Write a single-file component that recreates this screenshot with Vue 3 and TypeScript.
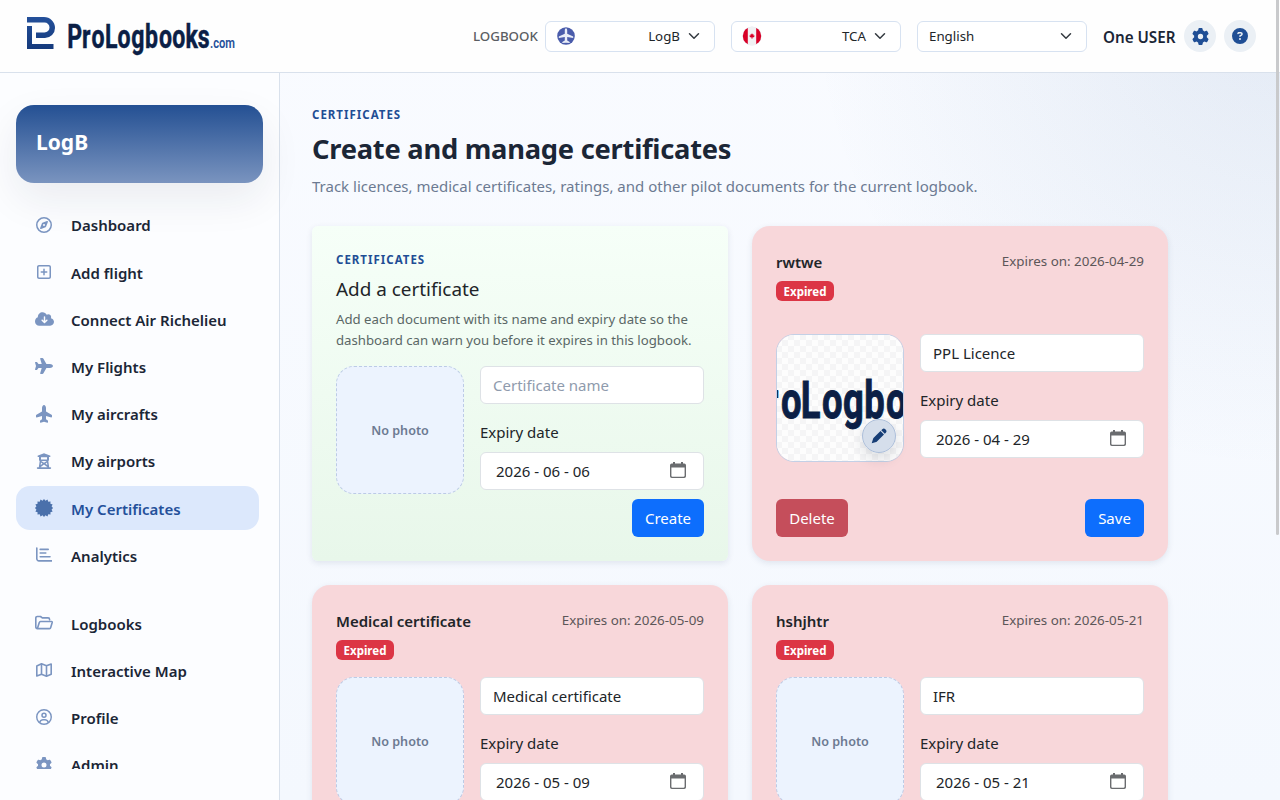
<script setup lang="ts">
interface IconDef { box: string; d: string; w: number; h?: number; stroke?: boolean }
interface NavItem { label: string; icon: string; active?: boolean }
interface Certificate { title: string; name: string; date: string; photo?: boolean }

const icons: Record<string, IconDef> = {
  compass: { box: '0 0 512 512', w: 16, d: 'M464 256A208 208 0 1 0 48 256a208 208 0 1 0 416 0zM0 256a256 256 0 1 1 512 0A256 256 0 1 1 0 256zm306.7 69.1L162.4 380.6c-19.4 7.5-38.5-11.6-31-31l55.5-144.3c3.3-8.5 9.9-15.1 18.4-18.4l144.3-55.5c19.4-7.5 38.5 11.6 31 31L325.1 306.7c-3.2 8.5-9.9 15.1-18.4 18.4zM288 256a32 32 0 1 0 -64 0 32 32 0 1 0 64 0z' },
  plus: { box: '0 0 448 512', w: 14, d: 'M64 80c-8.8 0-16 7.2-16 16V416c0 8.8 7.2 16 16 16H384c8.8 0 16-7.2 16-16V96c0-8.8-7.2-16-16-16H64zM0 96C0 60.7 28.7 32 64 32H384c35.3 0 64 28.7 64 64V416c0 35.3-28.7 64-64 64H64c-35.3 0-64-28.7-64-64V96zM200 344V280H136c-13.3 0-24-10.7-24-24s10.7-24 24-24h64V168c0-13.3 10.7-24 24-24s24 10.7 24 24v64h64c13.3 0 24 10.7 24 24s-10.7 24-24 24H248v64c0 13.3-10.7 24-24 24s-24-10.7-24-24z' },
  cloud: { box: '0 0 640 512', w: 19, d: 'M144 480C64.5 480 0 415.5 0 336c0-62.8 40.2-116.2 96.2-135.9c-.1-2.7-.2-5.4-.2-8.1c0-88.4 71.6-160 160-160c59.3 0 111 32.2 138.7 80.2C409.9 102 428.3 96 448 96c53 0 96 43 96 96c0 12.2-2.3 23.8-6.4 34.6C596 238.4 640 290.1 640 352c0 70.7-57.3 128-128 128H144zm79-167l80 80c9.4 9.4 24.6 9.4 33.9 0l80-80c9.4-9.4 9.4-24.6 0-33.9s-24.6-9.4-33.9 0l-39 39V184c0-13.3-10.7-24-24-24s-24 10.7-24 24V318.1l-39-39c-9.4-9.4-24.6-9.4-33.9 0s-9.4 24.6 0 33.9z' },
  plane: { box: '0 0 576 512', w: 18, d: 'M482.3 192c34.2 0 93.7 29 93.7 64c0 36-59.5 64-93.7 64l-116.6 0L265.2 495.9c-5.7 10-16.3 16.1-27.8 16.1l-56.2 0c-10.6 0-18.3-10.2-15.4-20.4l49-171.6L112 320 68.8 377.6c-3 4-7.8 6.4-12.8 6.4l-42 0c-7.8 0-14-6.3-14-14c0-1.3 .2-2.6 .5-3.9L32 256 .5 145.9c-.4-1.3-.5-2.6-.5-3.9c0-7.8 6.3-14 14-14l42 0c5 0 9.8 2.4 12.8 6.4L112 192l102.9 0-49-171.6C162.9 10.2 170.6 0 181.2 0l56.2 0c11.5 0 22.1 6.2 27.8 16.1L365.7 192l116.6 0z' },
  planeUp: { box: '0 -32 512 576', w: 16, h: 18, d: 'M192 61.7C192 27.5 221-32 256-32c36 0 64 59.5 64 93.7l0 116.6L497.8 278.1c8.8 4.9 14.2 14.1 14.2 24.2l0 45.6c0 11-10.5 19-21.2 16.1L320 320l0 104 57.6 43.2c4 3 6.4 7.8 6.4 12.8l0 42c0 7.8-6.3 14-14 14c-1.3 0-2.6-.2-3.9-.5L256 504 145.9 535.5c-1.3 .4-2.6 .5-3.9 .5c-7.8 0-14-6.3-14-14l0-42c0-5 2.4-9.8 6.4-12.8L192 424l0-104L21.2 364.1C10.5 367 0 359 0 348l0-45.6c0-10.1 5.5-19.4 14.2-24.2L192 178.3z' },
  tower: { box: '0 0 16 16', w: 16, d: 'M8 .2 14 2.6a.8.8 0 0 1-.3 1.5H13V7a.9.9 0 0 1-.7.9l.9 6.4h1.2a.8.8 0 0 1 0 1.6H1.6a.8.8 0 0 1 0-1.6h1.2L3.700 7.900A.9.9 0 0 1 3 7V4.100h-.7A.8.8 0 0 1 2 2.600zM5 4.200v2.200h6V4.200zM5.200 8l2.800 1.800L10.800 8zM5 9.500 4.700 12l1.900-1.300zM11 9.500l.3 2.500-1.900-1.300zM8 11.600l-3.500 2.700h7z' },
  certificate: { box: '0 0 16 16', w: 18, h: 18, d: 'm8 0 1.300 1.500L11.100.500l.700 1.900 2-.200-.100 2 2 .600-1 1.700L16 8l-1.300 1.500 1 1.700-2 .600.100 2-2-.200-.700 1.900-1.800-1L8 16l-1.300-1.500-1.800 1-.700-1.900-2 .200.100-2-2-.600 1-1.700L0 8l1.300-1.500-1-1.700 2-.600-.100-2 2 .200.700-1.900 1.800 1z' },
  chart: { box: '0 0 16 16', w: 16, stroke: true, d: 'M.8 1v10.800a2.100 2.100 0 0 0 2.100 2.100H16M4.200 2.400h8M4.200 6h5.600M4.200 9.800H14' },
  folder: { box: '0 0 18 16', w: 18, stroke: true, d: 'M2.600 13.600H2.300A1.500 1.500 0 0 1 .800 12.100V3A1.500 1.500 0 0 1 2.300 1.500h3.200l1.800 1.400h5.800a1.500 1.500 0 0 1 1.500 1.500v.300M2.400 13.600 4.300 7.400a1.300 1.300 0 0 1 1.200-.900h10.900a.8.8 0 0 1 .8 1l-1.500 5.100a1.300 1.300 0 0 1-1.300 1z' },
  map: { box: '0 0 16 16', w: 16, stroke: true, d: 'M.8 4 5.500 1.800l5 2L15.200 2v10.200l-4.700 2-5-2L.8 14zM5.500 1.800v10.400M10.500 3.800v10.400' },
  user: { box: '0 0 512 512', w: 16, d: 'M406.5 399.6C387.4 352.9 341.5 320 288 320H224c-53.5 0-99.4 32.9-118.5 79.6C69.9 362.2 48 311.7 48 256C48 141.1 141.1 48 256 48s208 93.1 208 208c0 55.7-21.9 106.2-57.5 143.6zm-40.1 32.7C334.4 452.4 296.6 464 256 464s-78.4-11.6-110.5-31.7c7.3-36.7 39.7-64.3 78.5-64.3h64c38.800 0 71.200 27.600 78.500 64.300zM256 512A256 256 0 1 0 256 0a256 256 0 1 0 0 512zm0-272a40 40 0 1 1 0-80 40 40 0 1 1 0 80zm-88-40a88 88 0 1 0 176 0 88 88 0 1 0 -176 0z' },
  gear: { box: '0 0 512 512', w: 16, d: 'M495.9 166.6c3.2 8.7 .5 18.4-6.4 24.6l-43.3 39.4c1.1 8.3 1.7 16.8 1.7 25.4s-.6 17.1-1.7 25.4l43.3 39.4c6.9 6.2 9.6 15.9 6.4 24.6c-4.4 11.9-9.7 23.3-15.8 34.3l-4.7 8.1c-6.6 11-14 21.4-22.1 31.2c-5.9 7.2-15.7 9.6-24.5 6.8l-55.7-17.7c-13.4 10.3-28.2 18.9-44 25.4l-12.5 57.1c-2 9.1-9 16.3-18.2 17.8c-13.8 2.3-28 3.5-42.5 3.5s-28.7-1.2-42.5-3.5c-9.2-1.5-16.2-8.7-18.2-17.8l-12.5-57.1c-15.8-6.5-30.6-15.1-44-25.4L83.1 425.9c-8.8 2.8-18.6 .3-24.5-6.8c-8.1-9.8-15.5-20.2-22.1-31.2l-4.7-8.1c-6.1-11-11.4-22.4-15.800-34.300c-3.200-8.700-.500-18.400 6.400-24.600l43.300-39.400C64.600 273.100 64 264.600 64 256s.6-17.100 1.700-25.400L22.400 191.200c-6.900-6.200-9.600-15.900-6.400-24.600c4.400-11.900 9.700-23.300 15.800-34.300l4.700-8.100c6.600-11 14-21.400 22.100-31.200c5.900-7.200 15.700-9.600 24.500-6.800l55.700 17.700c13.400-10.300 28.200-18.900 44-25.400l12.500-57.100c2-9.100 9-16.300 18.200-17.800C227.300 1.200 241.500 0 256 0s28.700 1.200 42.500 3.500c9.200 1.500 16.200 8.700 18.200 17.800l12.500 57.100c15.800 6.500 30.600 15.100 44 25.400l55.700-17.700c8.800-2.800 18.600-.3 24.500 6.800c8.100 9.800 15.500 20.200 22.100 31.200l4.700 8.100c6.100 11 11.400 22.400 15.800 34.300zM256 336a80 80 0 1 0 0-160 80 80 0 1 0 0 160z' },
}
const question = 'M256 512A256 256 0 1 0 256 0a256 256 0 1 0 0 512zM169.8 165.3c7.9-22.3 29.1-37.3 52.8-37.3h58.3c34.9 0 63.1 28.3 63.1 63.1c0 22.6-12.1 43.5-31.7 54.8L280 264.4c-.2 13-10.9 23.6-24 23.6c-13.3 0-24-10.7-24-24V250.5c0-8.6 4.6-16.5 12.1-20.8l44.3-25.4c4.7-2.7 7.6-7.7 7.6-13.1c0-8.4-6.8-15.1-15.1-15.1H222.6c-3.4 0-6.4 2.1-7.5 5.3l-.4 1.2c-4.4 12.5-18.2 19-30.6 14.6s-19-18.2-14.6-30.6l.4-1.2zM224 352a32 32 0 1 1 64 0 32 32 0 1 1 -64 0z'

const groups: NavItem[][] = [
  [
    { label: 'Dashboard', icon: 'compass' },
    { label: 'Add flight', icon: 'plus' },
    { label: 'Connect Air Richelieu', icon: 'cloud' },
    { label: 'My Flights', icon: 'plane' },
    { label: 'My aircrafts', icon: 'planeUp' },
    { label: 'My airports', icon: 'tower' },
    { label: 'My Certificates', icon: 'certificate', active: true },
    { label: 'Analytics', icon: 'chart' },
  ],
  [
    { label: 'Logbooks', icon: 'folder' },
    { label: 'Interactive Map', icon: 'map' },
    { label: 'Profile', icon: 'user' },
    { label: 'Admin', icon: 'gear' },
  ],
]

const certificates: Certificate[] = [
  { title: 'rwtwe', name: 'PPL Licence', date: '2026-04-29', photo: true },
  { title: 'Medical certificate', name: 'Medical certificate', date: '2026-05-09' },
  { title: 'hshjhtr', name: 'IFR', date: '2026-05-21' },
]
const parts = (date: string): string => date.split('-').join(' - ')
</script>

<template>
  <div class="app">
    <header class="topbar">
      <svg class="logo" width="212" height="44" viewBox="26 14 212 44" role="img" aria-label="ProLogbooks.com">
        <defs>
          <linearGradient id="mark" x1="0" y1="0" x2="0" y2="1">
            <stop offset="0" stop-color="#24509a" />
            <stop offset="1" stop-color="#153a7c" />
          </linearGradient>
        </defs>
        <path fill="url(#mark)" d="M27 17h17a11 11 0 0 1 11 11v0a10 10 0 0 1-10 10H36v-5.500h8.500a5 5 0 0 0 5-5v0a5 5 0 0 0-5-5H27zM27 26h5v18h21.500v5H27z" />
        <g transform="scale(.7 1)">
          <text x="96.100 117.300 130.700 149.900 167.900 187.400 207.300 227 246 265 282.600" y="48" class="wordmark" font-size="33">ProLogbooks</text>
        </g>
        <text x="210" y="48" class="wordmark com" font-size="15.500" textLength="25" lengthAdjust="spacingAndGlyphs">.com</text>
      </svg>
      <div class="tools">
        <span class="tools-label">LOGBOOK</span>
        <div class="select">
          <svg class="round" width="18" height="18" viewBox="0 0 18 18">
            <circle cx="9" cy="9" r="8.800" fill="#4a5cab" />
            <path fill="#e9edf7" d="M9 1.300c.7 0 1.200 1 1.200 2.200v3.300l6 2.700v1.600l-6-1v3.500l2.500 1.400v1.100L9 15.700l-3.700.4V15l2.500-1.400v-3.500l-6 1V9.500l6-2.700V3.500c0-1.200.5-2.200 1.200-2.200z" />
          </svg>
          <span class="select-value">LogB</span>
          <svg class="chevron" width="12" height="12" viewBox="0 0 16 16"><path d="m2 5 6 6 6-6" /></svg>
        </div>
        <div class="select">
          <svg class="round flag" width="20" height="20" viewBox="0 0 20 20">
            <clipPath id="disc"><circle cx="10" cy="10" r="9.200" /></clipPath>
            <circle cx="10" cy="10" r="9.600" fill="#e4e9f3" />
            <g clip-path="url(#disc)">
              <path fill="#f1f1f3" d="M0 0h20v20H0z" />
              <path fill="#d80027" d="M0 0h5.800v20H0zM14.200 0H20v20h-5.800zM10 7.300l.8 1.200.8-.3-.1 1.300 1.400.2-1.200 1.500-1.300.3v1.200h-.8v-1.200l-1.300-.3-1.200-1.500 1.400-.2-.1-1.300.8.3z" />
            </g>
          </svg>
          <span class="select-value">TCA</span>
          <svg class="chevron" width="12" height="12" viewBox="0 0 16 16"><path d="m2 5 6 6 6-6" /></svg>
        </div>
        <div class="select">
          <span class="select-value lang">English</span>
          <svg class="chevron" width="12" height="12" viewBox="0 0 16 16"><path d="m2 5 6 6 6-6" /></svg>
        </div>
        <span class="who">One USER</span>
        <button class="tool-btn" aria-label="Settings">
          <svg width="17" height="17" viewBox="0 0 512 512"><path :d="icons.gear.d" /></svg>
        </button>
        <button class="tool-btn help" aria-label="Help">
          <svg width="16" height="16" viewBox="0 0 512 512"><path :d="question" /></svg>
        </button>
      </div>
    </header>

    <div class="body">
      <aside class="sidebar">
        <div class="book">LogB</div>
        <nav class="nav">
          <div v-for="(group, g) in groups" :key="g" class="nav-group">
            <a v-for="item in group" :key="item.label" class="nav-item" :class="{ active: item.active }">
              <span class="nav-icon">
                <svg
                  :width="icons[item.icon].w"
                  :height="icons[item.icon].h ?? 16"
                  :viewBox="icons[item.icon].box"
                  :class="{ outline: icons[item.icon].stroke }"
                >
                  <path :d="icons[item.icon].d" fill-rule="evenodd" />
                </svg>
              </span>
              <span class="nav-label">{{ item.label }}</span>
            </a>
          </div>
        </nav>
      </aside>

      <main class="main">
        <p class="eyebrow">CERTIFICATES</p>
        <h1>Create and manage certificates</h1>
        <p class="lead">Track licences, medical certificates, ratings, and other pilot documents for the current logbook.</p>

        <div class="grid">
          <section class="card add">
            <div>
              <p class="eyebrow">CERTIFICATES</p>
              <h2>Add a certificate</h2>
              <p class="hint">Add each document with its name and expiry date so the<br />dashboard can warn you before it expires in this logbook.</p>
            </div>
            <div class="entry">
              <div class="photo empty">No photo</div>
              <div class="fields">
                <div class="control placeholder">Certificate name</div>
                <label>Expiry date</label>
                <div class="control date">
                  <span>2026 - 06 - 06</span>
                  <svg width="16" height="17" viewBox="0 0 16 17"><path fill-rule="evenodd" d="M3 0h2v1.500h6V0h2v1.500h1.200A1.800 1.800 0 0 1 16 3.300v11a1.800 1.800 0 0 1-1.800 1.800H1.800A1.800 1.800 0 0 1 0 14.300v-11a1.800 1.800 0 0 1 1.800-1.800H3zM1.400 5.500v8.300c0 .5.400.9.900.9h11.400c.5 0 .9-.4.9-.9V5.500z" /></svg>
                </div>
              </div>
            </div>
            <div class="foot end"><button class="btn primary">Create</button></div>
          </section>

          <section v-for="cert in certificates" :key="cert.title" class="card expired">
            <div class="head">
              <div>
                <h3>{{ cert.title }}</h3>
                <span class="badge">Expired</span>
              </div>
              <span class="expires">Expires on: {{ cert.date }}</span>
            </div>
            <div class="entry">
              <div v-if="cert.photo" class="photo">
                <svg class="photo-art" width="126" height="126" viewBox="1 1 126 126">
                  <defs>
                    <pattern id="checks" width="12" height="12" patternUnits="userSpaceOnUse">
                      <path fill="#f5f5f6" d="M0 0h6v6H0zM6 6h6v6H6z" />
                    </pattern>
                  </defs>
                  <path fill="#fdfdfd" d="M0 0h128v128H0z" />
                  <path fill="url(#checks)" d="M0 0h128v128H0z" />
                  <g transform="scale(.7 1)">
                    <text x="-15.700 7.100 35.400 65.700 95.700 126 157" y="84" class="wordmark large" font-size="52">roLogbo</text>
                  </g>
                </svg>
                <span class="edit">
                  <svg width="16" height="16" viewBox="0 0 16 16"><path d="m10.300 2.200 1-1a2.200 2.200 0 0 1 3 0l.5.500a2.200 2.200 0 0 1 0 3l-1 1zM9.500 3 13 6.500l-6.800 6.800c-.3.300-.6.500-1 .6L.7 15.300l1.400-4.500c.1-.4.3-.7.6-1z" /></svg>
                </span>
              </div>
              <div v-else class="photo empty">No photo</div>
              <div class="fields">
                <div class="control">{{ cert.name }}</div>
                <label>Expiry date</label>
                <div class="control date">
                  <span>{{ parts(cert.date) }}</span>
                  <svg width="16" height="17" viewBox="0 0 16 17"><path fill-rule="evenodd" d="M3 0h2v1.500h6V0h2v1.500h1.200A1.800 1.800 0 0 1 16 3.300v11a1.800 1.800 0 0 1-1.800 1.800H1.800A1.800 1.800 0 0 1 0 14.300v-11a1.800 1.800 0 0 1 1.800-1.800H3zM1.400 5.500v8.300c0 .5.400.9.900.9h11.400c.5 0 .9-.4.9-.9V5.500z" /></svg>
                </div>
              </div>
            </div>
            <div class="foot">
              <button class="btn danger">Delete</button>
              <button class="btn primary">Save</button>
            </div>
          </section>
        </div>
      </main>
    </div>
    <div class="scroll-thumb"></div>
  </div>
</template>

<style scoped>
.app {
  position: relative;
  height: 800px;
  overflow: hidden;
  display: flex;
  flex-direction: column;
  background:
    radial-gradient(circle at 100% 0, rgba(36, 86, 155, 0.1), transparent 470px),
    linear-gradient(180deg, #f9fbff 0%, #f4f8fe 100%);
  font-family: "Noto Sans", sans-serif;
  font-size: 15px;
  color: #212529;
}
.app * { box-sizing: border-box; }
p, h1, h2, h3 { margin: 0; }

.topbar {
  flex: none;
  height: 73px;
  padding: 0 24px 0 26px;
  display: flex;
  align-items: center;
  justify-content: space-between;
  background: #fefefe;
  border-bottom: 1px solid #d9e1ec;
}
.logo { display: block; }
.wordmark { font-family: Roboto, sans-serif; font-weight: 700; fill: #0b1f46; stroke: #0b1f46; stroke-width: 0.5; }
.wordmark.large { stroke-width: 1; }
.wordmark.com { font-weight: 600; fill: #24509a; stroke: none; }
.tools { display: flex; align-items: center; }
.tools-label { font-size: 13.300px; font-weight: 500; color: #5a5d62; margin-right: 7px; width: 65px; white-space: nowrap; }
.select {
  width: 170px;
  height: 31px;
  margin-right: 16px;
  padding: 0 14px 0 11px;
  display: flex;
  align-items: center;
  border: 1px solid #d7e2f1;
  border-radius: 6px;
  background: #fff;
  font-size: 13.300px;
}
.round { margin-top: -1px; }
.flag { margin-left: -1px; }
.select-value { margin-left: auto; margin-right: 8px; }
.select-value.lang { margin-left: 0; margin-right: auto; }
.chevron { fill: none; stroke: #343a40; stroke-width: 2; stroke-linecap: round; stroke-linejoin: round; }
.who { width: 73px; margin-right: 8px; padding-top: 1px; font-weight: 600; font-size: 15.200px; color: #1b2636; white-space: nowrap; }
.tool-btn {
  width: 32px; height: 32px; padding: 0; border: 0; border-radius: 50%;
  display: flex; align-items: center; justify-content: center;
  background: #ebf0f5; fill: #1f4e95;
}
.tool-btn.help { margin-left: 8px; }

.body { flex: 1; min-height: 0; display: flex; }
.sidebar {
  width: 280px;
  flex: none;
  padding: 32px 16px 31px;
  display: flex;
  flex-direction: column;
  background: #fcfdff;
  border-right: 1px solid #d9e1ec;
}
.book {
  flex: none;
  height: 78px;
  padding: 20px;
  border-radius: 18px;
  background: linear-gradient(180deg, #245093, #7a94bf);
  box-shadow: 0 16px 40px rgba(25, 35, 60, 0.08);
  color: #fff;
  font-size: 21px;
  font-weight: 700;
  line-height: 34px;
}
.nav { flex: 1; min-height: 0; overflow: hidden; padding-top: 20.300px; display: flex; flex-direction: column; gap: 24.700px; width: 243px; }
.nav-group { display: flex; flex-direction: column; gap: 4px; }
.nav-item {
  flex: none;
  height: 43.200px;
  padding-left: 16px;
  display: flex;
  align-items: center;
  gap: 15px;
  border-radius: 14px;
  color: #1b2636;
  font-weight: 600;
}
.nav-icon { width: 24px; display: flex; justify-content: center; fill: #7b95c1; color: #7b95c1; }
.nav-icon .outline { fill: none; stroke: currentColor; stroke-width: 1.600; stroke-linejoin: round; stroke-linecap: round; }
.nav-label { padding-top: 1px; white-space: nowrap; }
.nav-item.active { background: #dce8fc; color: #24509a; }
.nav-item.active .nav-icon { fill: #4a70ab; }

.main { flex: 1; min-width: 0; padding: 33px 32px 0; }
.eyebrow { font-size: 11.500px; line-height: 18px; font-weight: 700; letter-spacing: 1px; color: #1f4e95; }
h1 { margin-top: 5px; font-size: 27.300px; line-height: 40px; font-weight: 700; letter-spacing: -0.250px; color: #1b2636; }
.lead { margin-top: 5px; line-height: 24px; color: #6c7a92; white-space: nowrap; }
.grid { margin-top: 28px; display: grid; grid-template-columns: 416px 416px; grid-template-rows: 335px 303px; gap: 24px; }
.card { padding: 24px; display: flex; flex-direction: column; justify-content: space-between; box-shadow: 0 2px 6px rgba(30, 50, 90, 0.1); }
.card.add { border-radius: 6px; background: linear-gradient(180deg, #f6fff8, #e8f7ea); }
.card.add .eyebrow { padding-top: 1px; }
.card.add .entry { height: 133px; margin-top: auto; }
.card.expired { border-radius: 18px; background: #f8d7da; }
h2 { margin-top: 6px; font-size: 18.900px; line-height: 28px; font-weight: 400; }
.hint { margin-top: 6px; font-size: 13.200px; line-height: 21px; color: #5a6766; white-space: nowrap; }
.head { height: 51px; display: flex; justify-content: space-between; }
h3 { font-size: 15px; line-height: 24px; font-weight: 600; }
.badge {
  display: block; width: 58px; height: 20px; margin-top: 7px; border-radius: 6px;
  background: #dc3545; color: #fff; font-size: 11.500px; font-weight: 700; line-height: 21px; text-align: center;
}
.expires { font-size: 13.400px; line-height: 23px; color: #5c5658; }
.entry { height: 132px; display: flex; gap: 16px; }
.photo { position: relative; width: 128px; height: 128px; flex: none; border: 1px solid #c3d0e6; border-radius: 18px; }
.photo.empty {
  display: flex; align-items: center; justify-content: center; border-style: dashed; border-color: #bccbe6;
  background: #ecf3fe; color: #6c7a92; font-size: 12.600px; font-weight: 600;
}
.photo-art { display: block; border-radius: 17px; }
.edit {
  position: absolute; right: 7px; bottom: 8px; width: 34px; height: 34px; border-radius: 50%;
  display: flex; align-items: center; justify-content: center;
  border: 1px solid #adbfda; background: rgba(209, 219, 233, 0.92); fill: #173e76; box-shadow: 0 6px 14px rgba(20, 35, 60, 0.14);
}
.fields { flex: 1; }
.control {
  height: 38px; padding: 0 12px; border: 1px solid #dee2e6; border-radius: 6px; background: #fff;
  line-height: 37px; white-space: nowrap;
}
.control.placeholder { color: #8f9bad; }
.control.date { display: flex; justify-content: space-between; align-items: center; padding: 0 17px 0 15px; }
.control.date svg { fill: #6a6c6f; margin-top: -1px; }
label { display: block; margin: 16px 0 8px; line-height: 24px; }
.foot { display: flex; justify-content: space-between; }
.foot.end { justify-content: flex-end; }
.btn { height: 38px; border: 0; border-radius: 6px; padding: 0; color: #fff; font: inherit; line-height: 38px; }
.btn.primary { background: #0d6efd; width: 59px; }
.end .btn.primary, .btn.danger { width: 72px; }
.btn.danger { background: #c54e5b; }
.scroll-thumb { position: absolute; right: 1px; top: 0; width: 3px; height: 535px; background: #c9cacc; border-radius: 0 0 2px 2px; }
</style>

<style>
body { margin: 0; overflow: hidden; }
</style>
